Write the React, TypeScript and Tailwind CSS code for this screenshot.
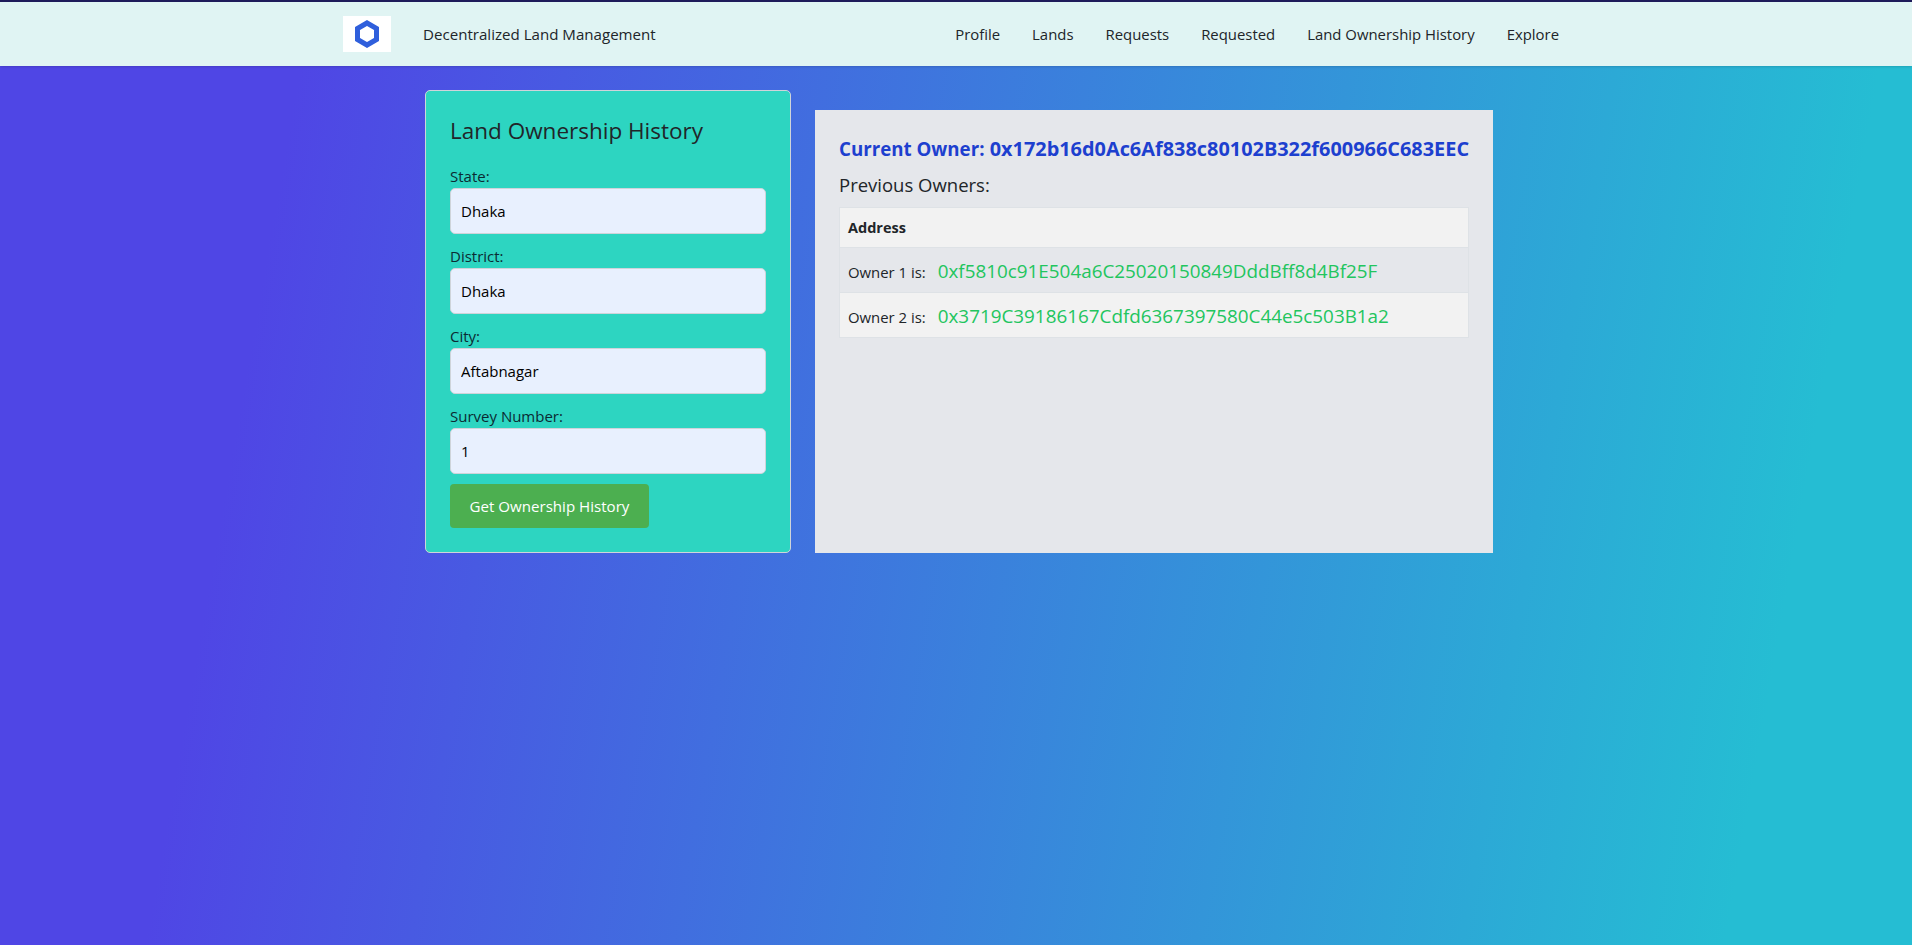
import React from "react"

const navLinks = ["Profile", "Lands", "Requests", "Requested", "Land Ownership History", "Explore"]

const fields = [
  { label: "State:", value: "Dhaka" },
  { label: "District:", value: "Dhaka" },
  { label: "City:", value: "Aftabnagar" },
  { label: "Survey Number:", value: "1" },
]

const owners = [
  { label: "Owner 1 is:", address: "0xf5810c91E504a6C25020150849DddBff8d4Bf25F", bg: "bg-[#e5e7eb]" },
  { label: "Owner 2 is:", address: "0x3719C39186167Cdfd6367397580C44e5c503B1a2", bg: "bg-[#f2f2f2]" },
]

export default function App() {
  return (
    <div className="min-h-screen flex flex-col bg-[linear-gradient(100deg,#4f46e5_15%,#25bdd3_91%)] font-['Open_Sans',sans-serif] text-[#212529]">
      <nav className="h-[66px] bg-[#e0f4f3] border-t-2 border-[#1e1b5a] shadow-sm">
        <div className="mx-auto w-[1226px] h-full flex items-center justify-between">
          <div className="flex items-center">
            <div className="w-[48px] h-[36px] bg-white flex items-center justify-center">
              <svg width="24" height="28" viewBox="0 0 24 28">
                <path d="M12 3 L21.5 8.5 V19.5 L12 25 L2.5 19.5 V8.5 Z" fill="none" stroke="#2f5fdc" strokeWidth="5" />
              </svg>
            </div>
            <span className="ml-[32px] text-[15.1px]">Decentralized Land Management</span>
          </div>
          <ul className="flex items-center -mr-[6px]">
            {navLinks.map((link) => (
              <li key={link} className="px-4 text-[14.9px] whitespace-nowrap">{link}</li>
            ))}
          </ul>
        </div>
      </nav>

      <main className="flex justify-center pl-[6px] pt-[24px]">
        <div className="w-[1068px] flex items-end gap-[24px]">
          <form className="w-[366px] h-[463px] shrink-0 bg-[#2dd5c1] border border-[#cfd4da] rounded-[5px] px-[24px] pt-[23px]">
            <h2 className="text-[22.5px] leading-[34px] mb-[16px]">Land Ownership History</h2>
            {fields.map((f) => (
              <div key={f.label} className="mb-[10px]">
                <label className="block h-[24px] text-[15px] leading-[25px] text-[#0b2b33]">{f.label}</label>
                <input
                  defaultValue={f.value}
                  className="block w-[316px] h-[46px] px-[10px] bg-[#e8f0fe] border border-[#ced4da] rounded-[5px] text-[15px] text-black"
                />
              </div>
            ))}
            <button type="button" className="w-[199px] h-[44px] bg-[#4caf50] text-white text-[15.1px] rounded-[4px]">
              Get Ownership History
            </button>
          </form>

          <section className="w-[678px] h-[443px] bg-[#e5e7eb] px-[24px] pt-[25px]">
            <h3 className="h-[28px] leading-[28px] font-bold text-[#1d40cf] whitespace-nowrap">
              <span className="text-[18.7px]">Current Owner:</span>
              <span className="text-[19.9px]"> 0x172b16d0Ac6Af838c80102B322f600966C683EEC</span>
            </h3>
            <p className="text-[18.5px] leading-[28px] mt-[8px] mb-[8px]">Previous Owners:</p>
            <table className="w-full border-collapse">
              <thead>
                <tr>
                  <th className="h-[40px] px-[8px] text-left text-[14.5px] font-bold bg-[#f2f2f2] border border-[#dee2e6]">Address</th>
                </tr>
              </thead>
              <tbody>
                {owners.map((o) => (
                  <tr key={o.label} className={o.bg}>
                    <td className="h-[45px] px-[8px] pt-[2px] border border-[#dee2e6] whitespace-nowrap">
                      <span className="text-[14.9px]">{o.label}</span>
                      <span className="ml-[12px] text-[18.85px] text-[#22c55e]">{o.address}</span>
                    </td>
                  </tr>
                ))}
              </tbody>
            </table>
          </section>
        </div>
      </main>
    </div>
  )
}
